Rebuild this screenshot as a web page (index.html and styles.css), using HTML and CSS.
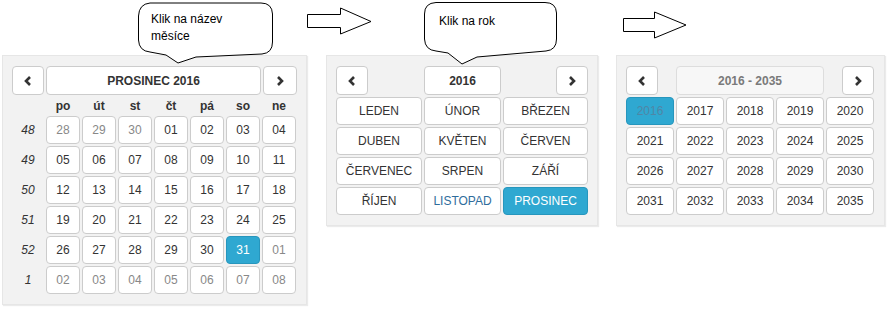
FILE: index.html
```html
<!DOCTYPE html>
<html lang="cs">
  <head>
    <meta charset="UTF-8" />
    <title>Výběr data</title>
    <link rel="stylesheet" href="styles.css">
  </head>
  <body>
    <div class="stage">
      <div class="panels">
        <!-- dny -->
        <div class="picker">
          <div class="head days-head">
            <div class="btn nav"><svg width="8" height="10" viewBox="0 0 8 10"><polyline points="6,1 2,5 6,9" /></svg></div>
            <div class="btn switch">PROSINEC 2016</div>
            <div class="btn nav"><svg width="8" height="10" viewBox="0 0 8 10"><polyline points="2,1 6,5 2,9" /></svg></div>
          </div>
          <div class="daygrid">
            <div class="dow"></div>
            <div class="dow">po</div><div class="dow">út</div><div class="dow">st</div><div class="dow">čt</div><div class="dow">pá</div><div class="dow">so</div><div class="dow">ne</div>

            <div class="wk">48</div>
            <div class="btn old">28</div><div class="btn old">29</div><div class="btn old">30</div><div class="btn">01</div><div class="btn">02</div><div class="btn">03</div><div class="btn">04</div>
            <div class="wk">49</div>
            <div class="btn">05</div><div class="btn">06</div><div class="btn">07</div><div class="btn">08</div><div class="btn">09</div><div class="btn">10</div><div class="btn">11</div>
            <div class="wk">50</div>
            <div class="btn">12</div><div class="btn">13</div><div class="btn">14</div><div class="btn">15</div><div class="btn">16</div><div class="btn">17</div><div class="btn">18</div>
            <div class="wk">51</div>
            <div class="btn">19</div><div class="btn">20</div><div class="btn">21</div><div class="btn">22</div><div class="btn">23</div><div class="btn">24</div><div class="btn">25</div>
            <div class="wk">52</div>
            <div class="btn">26</div><div class="btn">27</div><div class="btn">28</div><div class="btn">29</div><div class="btn">30</div><div class="btn active">31</div><div class="btn old">01</div>
            <div class="wk">1</div>
            <div class="btn old">02</div><div class="btn old">03</div><div class="btn old">04</div><div class="btn old">05</div><div class="btn old">06</div><div class="btn old">07</div><div class="btn old">08</div>
          </div>
        </div>

        <!-- mesice -->
        <div class="picker months-panel">
          <div class="monthgrid">
            <div class="btn nav nav-left"><svg width="8" height="10" viewBox="0 0 8 10"><polyline points="6,1 2,5 6,9" /></svg></div>
            <div class="btn switch">2016</div>
            <div class="btn nav nav-right"><svg width="8" height="10" viewBox="0 0 8 10"><polyline points="2,1 6,5 2,9" /></svg></div>

            <div class="btn">LEDEN</div><div class="btn">ÚNOR</div><div class="btn">BŘEZEN</div>
            <div class="btn">DUBEN</div><div class="btn">KVĚTEN</div><div class="btn">ČERVEN</div>
            <div class="btn">ČERVENEC</div><div class="btn">SRPEN</div><div class="btn">ZÁŘÍ</div>
            <div class="btn">ŘÍJEN</div><div class="btn today">LISTOPAD</div><div class="btn active">PROSINEC</div>
          </div>
        </div>

        <!-- roky -->
        <div class="picker years-panel">
          <div class="yeargrid">
            <div class="btn nav nav-left"><svg width="8" height="10" viewBox="0 0 8 10"><polyline points="6,1 2,5 6,9" /></svg></div>
            <div class="btn switch disabled">2016 - 2035</div>
            <div class="btn nav nav-right"><svg width="8" height="10" viewBox="0 0 8 10"><polyline points="2,1 6,5 2,9" /></svg></div>

            <div class="btn active muted">2016</div><div class="btn">2017</div><div class="btn">2018</div><div class="btn">2019</div><div class="btn">2020</div>
            <div class="btn">2021</div><div class="btn">2022</div><div class="btn">2023</div><div class="btn">2024</div><div class="btn">2025</div>
            <div class="btn">2026</div><div class="btn">2027</div><div class="btn">2028</div><div class="btn">2029</div><div class="btn">2030</div>
            <div class="btn">2031</div><div class="btn">2032</div><div class="btn">2033</div><div class="btn">2034</div><div class="btn">2035</div>
          </div>
        </div>
      </div>

      <!-- popisky -->
      <svg class="notes" width="887" height="315" viewBox="0 0 887 315">
        <path d="M150,3 Q139,4 138.5,16 L138.5,40 Q139,51 150,52 L166,55 L178,63 L196,57 L262,54 Q272.5,53 272.5,42 L272.5,14 Q272,3 261,3 Z" />
        <path d="M436,2.5 Q424.5,3 424.5,14 L424.5,39 Q425,50 436,51 L448,53 L462,64 L477,57 L546,51 Q556.5,50 556.5,39 L556.5,13 Q556,2.5 545,2.5 Z" />
        <polygon points="307.5,14.5 340.5,14.5 340.5,8 371,21.5 340.5,34 340.5,27.5 307.5,27.5" />
        <polygon points="623.5,18.5 654.5,18.5 654.5,12 686,25 654.5,38 654.5,31.5 623.5,31.5" />
      </svg>
      <div class="note note-month">Klik na název<br>měsíce</div>
      <div class="note note-year">Klik na rok</div>
    </div>
  </body>
</html>
```

FILE: styles.css
```css
body {
  font-family: "Liberation Sans", Arial, sans-serif;
  background-color: #ffffff;
  color: #333333;
  margin: 0;
  padding: 0;
}

.stage {
  position: relative;
  width: 887px;
  height: 315px;
  overflow: hidden;
}

.panels {
  display: flex;
  align-items: flex-start;
  padding: 55px 0 0 2px;
}

.picker {
  box-sizing: border-box;
  background-color: #f2f2f2;
  border: 1px solid #e6e6e6;
  box-shadow: 1px 1px 1px rgba(0, 0, 0, 0.08);
  padding: 10px 9px;
  font-size: 12px;
}

.picker:first-child {
  width: 305px;
}

.months-panel {
  width: 272px;
  margin-left: 19px;
}

.years-panel {
  width: 269px;
  margin-left: 18px;
}

.btn {
  box-sizing: border-box;
  display: flex;
  justify-content: center;
  align-items: center;
  background-color: #ffffff;
  border: 1px solid #cccccc;
  border-radius: 4px;
}

.btn.old {
  color: #888888;
}

.btn.active {
  background-color: #2fa8d1;
  border-color: #2796bd;
  color: #ffffff;
}

.btn.active.muted {
  color: #4f86a6;
}

.btn.today {
  color: #2f6d9c;
}

.switch {
  font-weight: bold;
}

.switch.disabled {
  font-weight: bold;
  color: #7a7a7a;
  background-color: #f7f7f7;
  border-color: #dddddd;
}

.nav svg polyline {
  fill: none;
  stroke: #333333;
  stroke-width: 2.6;
}

.head {
  display: grid;
  grid-template-columns: 32px 1fr 34px;
  column-gap: 2px;
  height: 29px;
}

.daygrid {
  display: grid;
  grid-template-columns: 32px repeat(7, 34px);
  grid-template-rows: 19px repeat(6, 28px);
  gap: 2px;
}

.dow {
  font-weight: bold;
  text-align: center;
  line-height: 22px;
}

.wk {
  display: flex;
  justify-content: center;
  align-items: center;
  font-style: italic;
}

.monthgrid {
  display: grid;
  grid-template-columns: 86px 77px 85px;
  grid-template-rows: 29px repeat(4, 28px);
  gap: 2px;
}

.yeargrid {
  display: grid;
  grid-template-columns: repeat(5, 48px);
  grid-template-rows: 29px repeat(4, 28px);
  gap: 2px;
}

.nav-left {
  width: 32px;
  justify-self: start;
}

.nav-right {
  width: 32px;
  justify-self: end;
}

.yeargrid .switch {
  grid-column: 2 / 5;
}

.notes {
  position: absolute;
  left: 0;
  top: 0;
  pointer-events: none;
}

.notes path,
.notes polygon {
  fill: #ffffff;
  stroke: #000000;
  stroke-width: 1;
}

.note {
  position: absolute;
  font-size: 12px;
  line-height: 17px;
  color: #000000;
}

.note-month {
  left: 151px;
  top: 11px;
}

.note-year {
  left: 439px;
  top: 13px;
}
```
